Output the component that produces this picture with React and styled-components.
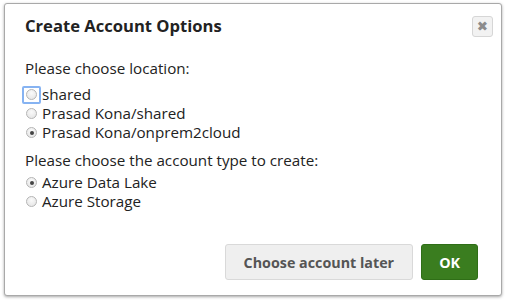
import React from "react";
import styled, { createGlobalStyle } from "styled-components";

const Global = createGlobalStyle`
  html, body { margin: 0; padding: 0; background: #fff; }
  body { font-family: "Open Sans", "Noto Sans", sans-serif; color: #222; }
`;

const Page = styled.div`
  width: 506px;
  height: 302px;
  padding: 3px 4px 6px 4px;
  box-sizing: border-box;
  background: #fff;
`;

const Dialog = styled.div`
  width: 498px;
  height: 293px;
  box-sizing: border-box;
  border: 1px solid #a9a9a9;
  border-radius: 3px;
  box-shadow: 0 1px 3px rgba(0, 0, 0, 0.35);
  background: #fff;
  display: flex;
  flex-direction: column;
`;

const Header = styled.div`
  display: flex;
  align-items: flex-start;
  justify-content: space-between;
  padding: 8px 8px 0 20px;
  height: 38px;
  box-sizing: border-box;
`;

const Title = styled.h1`
  margin: 0;
  font-size: 16.6px;
  font-weight: 700;
  color: #222;
  line-height: 24px;
  padding-top: 2px;
`;

const CloseButton = styled.button`
  width: 21px;
  height: 21px;
  margin-top: 4px;
  padding: 0;
  border: 1px solid #d6d6d6;
  border-radius: 3px;
  background: #f2f2f2;
  color: #8c8c8c;
  font-size: 13.5px;
  line-height: 19px;
  font-family: "DejaVu Sans", sans-serif;
  display: flex;
  align-items: center;
  justify-content: center;
`;

const Body = styled.div`
  flex: 1;
  padding: 16px 20px 0 17px;
  font-size: 15.2px;
`;

const Label = styled.div`
  padding-left: 3px;
  line-height: 20px;
  margin-top: ${(p) => p.$top || 0}px;
  margin-bottom: ${(p) => p.$gap || 0}px;
  color: #222;
`;

const Option = styled.label`
  display: flex;
  align-items: center;
  height: 19px;
  line-height: 19px;
  color: #222;
`;

const RadioWrap = styled.span`
  width: 19px;
  height: 18px;
  box-sizing: border-box;
  display: flex;
  align-items: center;
  justify-content: center;
  margin-right: 1px;
  border: 2px solid ${(p) => (p.$focus ? "#86b3f2" : "transparent")};
  border-radius: 2px;
`;

const Radio = styled.span`
  width: 11px;
  height: 11px;
  box-sizing: border-box;
  border-radius: 50%;
  border: 1px solid #b5b5b5;
  background: radial-gradient(circle at 50% 35%, #fafafa 0%, #e2e2e2 100%);
  display: flex;
  align-items: center;
  justify-content: center;
  &::after {
    content: "";
    width: 4px;
    height: 4px;
    border-radius: 50%;
    background: ${(p) => (p.$checked ? "#444" : "transparent")};
  }
`;

const Footer = styled.div`
  display: flex;
  justify-content: flex-end;
  gap: 8px;
  padding: 0 23px 15px 0;
`;

const Button = styled.button`
  height: 36px;
  padding: 0 ${(p) => (p.$primary ? 17 : 18)}px;
  border-radius: 3px;
  font-family: "Open Sans", sans-serif;
  font-weight: 700;
  font-size: 14.3px;
  border: 1px solid ${(p) => (p.$primary ? "#2f6e17" : "#d9d9d9")};
  background: ${(p) => (p.$primary ? "#3a7d1f" : "#efefef")};
  color: ${(p) => (p.$primary ? "#fff" : "#555")};
`;

function RadioOption({ checked, focus, children }) {
  return (
    <Option>
      <RadioWrap $focus={focus}>
        <Radio $checked={checked} />
      </RadioWrap>
      {children}
    </Option>
  );
}

export default function App() {
  return (
    <>
      <Global />
      <Page>
        <Dialog>
          <Header>
            <Title>Create Account Options</Title>
            <CloseButton aria-label="close">✖</CloseButton>
          </Header>
          <Body>
            <Label $gap={7}>Please choose location:</Label>
            <RadioOption focus>shared</RadioOption>
            <RadioOption>Prasad Kona/shared</RadioOption>
            <RadioOption checked>Prasad Kona/onprem2cloud</RadioOption>
            <Label $top={8} $gap={3}>Please choose the account type to create:</Label>
            <RadioOption checked>Azure Data Lake</RadioOption>
            <RadioOption>Azure Storage</RadioOption>
          </Body>
          <Footer>
            <Button>Choose account later</Button>
            <Button $primary>OK</Button>
          </Footer>
        </Dialog>
      </Page>
    </>
  );
}
